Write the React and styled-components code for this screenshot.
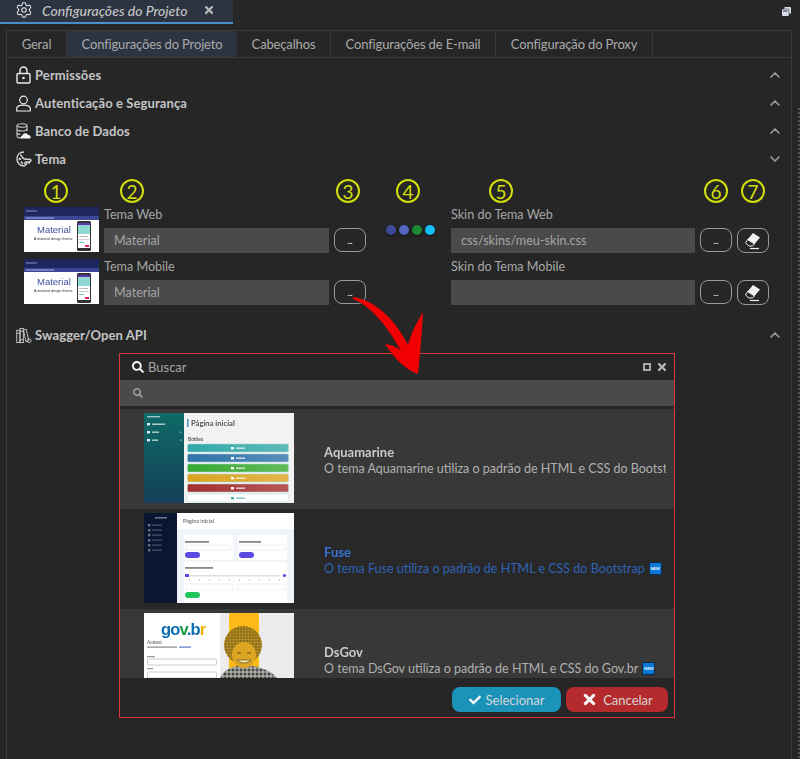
import React from 'react';
import styled, { createGlobalStyle } from 'styled-components';
import { ChevronUp, ChevronDown, Settings } from 'lucide-react';
import { FaSearch, FaCheck, FaTimes, FaWindowRestore } from 'react-icons/fa';

const tabs = [
  { label: 'Geral', width: 60 },
  { label: 'Configurações do Projeto', width: 170, active: true },
  { label: 'Cabeçalhos', width: 94 },
  { label: 'Configurações de E-mail', width: 165 },
  { label: 'Configuração do Proxy', width: 157 },
];

function App() {
  return (
    <Page>
      <GlobalStyle />
      <TopBar>
        <TopTab>
          <Settings size={18} strokeWidth={1.4} color="#e6e6e6" />
          <TopTitle>Configurações do Projeto</TopTitle>
          <FaTimes size={12} color="#b8b8b8" />
        </TopTab>
        <RestoreIcon>
          <FaWindowRestore size={9} />
        </RestoreIcon>
      </TopBar>

      <Panel>
        <TabRow>
          {tabs.map(tab => (
            <Tab key={tab.label} $width={tab.width} $active={tab.active}>
              {tab.label}
            </Tab>
          ))}
        </TabRow>

        <Section icon={<LockIcon />} title="Permissões" />
        <Section icon={<UserIcon />} title="Autenticação e Segurança" />
        <Section icon={<DatabaseIcon />} title="Banco de Dados" />
        <Section icon={<PaletteIcon />} title="Tema" open />

        <ThemeGrid>
          <Mark $offset={20}>1</Mark>
          <Mark $offset={16}>2</Mark>
          <Mark $offset={2}>3</Mark>
          <Mark $offset={25}>4</Mark>
          <Mark $offset={38}>5</Mark>
          <Mark $offset={4}>6</Mark>
          <Mark $offset={4}>7</Mark>

          <MaterialThumb />
          <Field label="Tema Web" value="Material" />
          <DotsButton>...</DotsButton>
          <Dots>
            <Dot $color="#3f4a96" />
            <Dot $color="#5566c0" />
            <Dot $color="#1f8a35" />
            <Dot $color="#12bdf5" />
          </Dots>
          <Field label="Skin do Tema Web" value="css/skins/meu-skin.css" />
          <DotsButton>...</DotsButton>
          <IconButton>
            <EraserIcon />
          </IconButton>

          <MaterialThumb />
          <Field label="Tema Mobile" value="Material" />
          <DotsButton>...</DotsButton>
          <div />
          <Field label="Skin do Tema Mobile" value="" />
          <DotsButton>...</DotsButton>
          <IconButton>
            <EraserIcon />
          </IconButton>
        </ThemeGrid>

        <SwaggerSection>
          <Section icon={<BooksIcon />} title="Swagger/Open API" />
        </SwaggerSection>
      </Panel>

      <Dialog>
        <DialogHeader>
          <FaSearch size={12} color="#f4f4f4" />
          <DialogTitle>Buscar</DialogTitle>
          <WindowActions>
            <SquareButton />
            <FaTimes size={12} color="#b4b4b4" />
          </WindowActions>
        </DialogHeader>
        <SearchBar>
          <FaSearch size={10} color="#a0a0a0" />
        </SearchBar>
        <List>
          <ThemeRow $alt>
            <AquamarineThumb />
            <ThemeText>
              <ThemeName>Aquamarine</ThemeName>
              <ThemeDesc>O tema Aquamarine utiliza o padrão de HTML e CSS do Bootstrap</ThemeDesc>
            </ThemeText>
          </ThemeRow>
          <ThemeRow $selected>
            <FuseThumb />
            <ThemeText>
              <ThemeName>Fuse</ThemeName>
              <ThemeDesc>
                O tema Fuse utiliza o padrão de HTML e CSS do Bootstrap
                <NewBadge>NEW</NewBadge>
              </ThemeDesc>
            </ThemeText>
          </ThemeRow>
          <ThemeRow $alt>
            <DsGovThumb />
            <ThemeText>
              <ThemeName>DsGov</ThemeName>
              <ThemeDesc>
                O tema DsGov utiliza o padrão de HTML e CSS do Gov.br
                <NewBadge>NEW</NewBadge>
              </ThemeDesc>
            </ThemeText>
          </ThemeRow>
        </List>
        <DialogFooter>
          <ActionButton $color="#1b92b8" $width={109}>
            <FaCheck size={12} color="#f4f4f4" />
            Selecionar
          </ActionButton>
          <ActionButton $color="#b52a2c" $width={102}>
            <FaTimes size={17} color="#f4f4f4" />
            Cancelar
          </ActionButton>
        </DialogFooter>
      </Dialog>

      <Arrow viewBox="0 0 800 759">
        <path
          d="M353 297 C376 300 396 321 408 345 C411 333 417 322 423 312 C422 333 420 354 418 374 C408 371 394 359 385 344 C392 345 397 347 401 351 C388 327 371 306 353 299 Z"
          fill="#f00000"
        />
      </Arrow>
      <EdgeStrip />
    </Page>
  );
}

function Section({ icon, title, open }) {
  return (
    <SectionRow>
      <SectionIcon>{icon}</SectionIcon>
      <SectionTitle>{title}</SectionTitle>
      {open ? <ChevronDown size={16} strokeWidth={2.5} color="#9a9a9a" /> : <ChevronUp size={16} strokeWidth={2.5} color="#9a9a9a" />}
    </SectionRow>
  );
}

function Field({ label, value }) {
  return (
    <FieldBox>
      <FieldLabel>{label}</FieldLabel>
      <Input>{value}</Input>
    </FieldBox>
  );
}

function LockIcon() {
  return (
    <svg width="16" height="18" viewBox="0 0 16 18" fill="none" stroke="#ececec" strokeWidth="1.4">
      <rect x="1" y="7.5" width="13" height="9.5" rx="1" />
      <path d="M4 7.5 V4.5 a3.5 3.5 0 0 1 7 0 V7.5" />
      <circle cx="7.5" cy="12" r="1.3" fill="#ececec" stroke="none" />
    </svg>
  );
}

function UserIcon() {
  return (
    <svg width="16" height="17" viewBox="0 0 16 17" fill="none" stroke="#ececec" strokeWidth="1.2">
      <circle cx="7.5" cy="5" r="3.8" />
      <path d="M0.7 16 V13.8 C0.7 11.3 3.5 10.2 7.5 10.2 C11.5 10.2 14.3 11.3 14.3 13.8 V16 Z" />
    </svg>
  );
}

function DatabaseIcon() {
  return (
    <svg width="16" height="16" viewBox="0 0 16 16" fill="none" stroke="#c8c8c8" strokeWidth="1.1">
      <ellipse cx="6" cy="2.5" rx="5" ry="1.8" />
      <path d="M1 2.5 V13 C1 14.2 3.5 15 6 15 M1 6 C1 7.2 3.5 8 6 8 C8.5 8 11 7.2 11 6 M1 9.5 C1 10.7 2.5 11.3 4.5 11.4 M11 2.5 V8" />
      <path d="M6 15.5 C4.5 15.5 4.5 12.5 6.5 12.5 C7 10 11 9.5 12 12 C14.5 11.5 16 15.5 13.5 15.5 Z" fill="#f4f4f4" stroke="none" />
    </svg>
  );
}

function PaletteIcon() {
  return (
    <svg width="16" height="16" viewBox="0 0 16 16" fill="none" stroke="#d4d4d4" strokeWidth="1.4">
      <path d="M8 1 C3.5 1 1 4 1 8 C1 12 4 15 8 15 C9.5 15 9.5 13.5 9 12.8 C8.5 12 9 11 10 11 H13 C14.5 11 15 10 15 8.5" />
      <path d="M4.5 3.5 C6 5 6 7.5 8.5 8 C10.5 8.4 13 8 15 8.5 M5 10.5 L7 13 M10.5 11 V14 M13 11 V13" />
      <circle cx="3.8" cy="8" r="1.2" fill="#d4d4d4" stroke="none" />
    </svg>
  );
}

function BooksIcon() {
  return (
    <svg width="17" height="17" viewBox="0 0 17 17" fill="none" stroke="#c8c8c8" strokeWidth="1">
      <rect x="0.8" y="3" width="3.4" height="13" />
      <rect x="4.2" y="1" width="3.6" height="15" />
      <path d="M0.8 6 H4.2 M4.2 4 H7.8 M4.2 13 H7.8" />
      <path d="M8 2.5 L11 2 L13.5 14 L10.5 15 Z" />
      <circle cx="14" cy="14" r="2" />
    </svg>
  );
}

function EraserIcon() {
  return (
    <svg width="20" height="18" viewBox="0 0 20 18" fill="none">
      <path d="M10 1 L17 5.5 L11.5 12 L4.5 7.5 Z" fill="#f2f2f2" />
      <path d="M4.5 7.5 L11.5 12 L9.5 14 H6 L2.5 11 Z" stroke="#f2f2f2" strokeWidth="1" />
      <path d="M7 16.5 H16" stroke="#f2f2f2" strokeWidth="1.2" />
    </svg>
  );
}

function MaterialThumb() {
  return (
    <ThumbPicture width="75" height="45" viewBox="0 0 75 45" role="img">
      <rect width="75" height="45" fill="#fff" />
      <rect width="75" height="9" fill="#1f2761" />
      <rect y="9" width="75" height="4" fill="#3a4694" />
      <rect x="2" y="3.5" width="11" height="1" fill="#8890b8" />
      <rect x="2" y="10.5" width="28" height="1" fill="#aab2dc" />
      <MaterialWord x="13" y="26">Material</MaterialWord>
      <MaterialSub x="10" y="32.5">A material design theme</MaterialSub>
      <rect x="53" y="14" width="14" height="30" rx="1.5" fill="#333" />
      <rect x="54" y="16" width="12" height="2" fill="#5e35b1" />
      <rect x="54" y="18" width="12" height="9" fill="#8fd8d2" />
      <rect x="54" y="27" width="12" height="14" fill="#fff" />
      <rect x="55" y="29" width="9" height="1" fill="#bbb" />
      <rect x="55" y="32" width="10" height="1" fill="#ccc" />
      <rect x="55" y="35" width="5" height="1" fill="#7cc" />
      <rect x="61" y="38" width="4" height="2" fill="#e91e63" />
    </ThumbPicture>
  );
}

const aquaButtons = ['#33a8a8', '#2f72a8', '#38aa32', '#dba41f', '#a52f2f', '#ffffff'];

function AquamarineThumb() {
  return (
    <ThumbSvg viewBox="0 0 150 90" role="img">
      <defs>
        <linearGradient id="aquaSide" x1="0" y1="0" x2="0" y2="1">
          <stop offset="0" stopColor="#0f6a66" />
          <stop offset="1" stopColor="#144059" />
        </linearGradient>
        <linearGradient id="aquaSheen" x1="0" y1="0" x2="1" y2="0">
          <stop offset="0" stopColor="#fff" stopOpacity="0" />
          <stop offset="1" stopColor="#fff" stopOpacity="0.2" />
        </linearGradient>
      </defs>
      <rect width="150" height="90" fill="#f2f2f2" />
      <rect width="40" height="90" fill="url(#aquaSide)" />
      <rect x="43" y="6" width="1.6" height="8" fill="#3fa0c0" />
      <ThumbHeading x="47" y="13">Página inicial</ThumbHeading>
      <ThumbSmall x="44" y="28" $bold>Botões</ThumbSmall>
      {aquaButtons.map((color, i) => (
        <g key={color}>
          <rect x="43.5" y={31 + i * 10} width="101" height="8" rx="1.5" fill={color} stroke="#a9d6d8" strokeWidth="0.5" />
          <rect x="43.5" y={31 + i * 10} width="101" height="8" rx="1.5" fill="url(#aquaSheen)" />
          <rect x="87" y={34 + i * 10} width="3" height="2.4" fill={i === 5 ? '#4aa' : '#fff'} />
          <rect x="92" y={34.4 + i * 10} width="9" height="1.6" fill={i === 5 ? '#8cc' : '#ffffffaa'} />
        </g>
      ))}
      <rect x="3" y="3" width="13" height="1.4" fill="#9fc4c4" />
      <rect x="3" y="10" width="3" height="2.4" fill="#dfeeee" />
      <rect x="8" y="10.5" width="13" height="1.4" fill="#b7d3d3" />
      <rect x="3" y="18" width="3" height="2.4" fill="#dfeeee" />
      <rect x="8" y="18.5" width="7" height="1.4" fill="#b7d3d3" />
      <rect x="3" y="26" width="3" height="2.4" fill="#dfeeee" />
      <rect x="8" y="26.5" width="6" height="1.4" fill="#b7d3d3" />
      <rect x="36" y="18.5" width="1.4" height="1.4" fill="#8fb3b3" />
      <rect x="36" y="26.5" width="1.4" height="1.4" fill="#8fb3b3" />
    </ThumbSvg>
  );
}

function FuseThumb() {
  return (
    <ThumbSvg viewBox="0 0 150 90" role="img">
      <rect width="150" height="90" fill="#f1f4f9" />
      <rect width="33" height="90" fill="#0b1730" />
      <rect x="33" width="117" height="16" fill="#fff" />
      <ThumbSmall x="39" y="10" $size={5.5}>Página inicial</ThumbSmall>
      <rect x="11" y="4" width="12" height="1.6" fill="#6a7488" />
      {[11, 16, 21, 26, 31, 36].map(y => (
        <g key={y}>
          <rect x="4" y={y} width="2.4" height="2.4" fill="#6a7488" />
          <rect x="8" y={y + 0.5} width="10" height="1.2" fill="#4a5570" />
        </g>
      ))}
      <rect x="40" y="22" width="49" height="25" fill="#fff" />
      <rect x="94" y="22" width="49" height="25" fill="#fff" />
      <rect x="40" y="49" width="103" height="41" fill="#fff" />
      <rect x="41" y="28" width="24" height="1.8" fill="#888" />
      <rect x="95" y="28" width="22" height="1.8" fill="#888" />
      <rect x="42" y="32" width="45" height="5" fill="#fff" stroke="#e2e2e2" strokeWidth="0.5" />
      <rect x="96" y="32" width="45" height="5" fill="#fff" stroke="#e2e2e2" strokeWidth="0.5" />
      <rect x="41" y="39" width="15" height="6" rx="3" fill="#5a4be0" />
      <rect x="95" y="39" width="15" height="6" rx="3" fill="#5a4be0" />
      <rect x="41" y="54" width="28" height="1.8" fill="#888" />
      <rect x="42" y="62" width="94" height="1.4" fill="#ddd" />
      <rect x="41" y="61" width="4" height="3" fill="#5a4be0" />
      <circle cx="140.5" cy="62.5" r="1.6" fill="#5a4be0" />
      {[45, 55, 65, 75, 85, 95, 105, 115, 125, 135].map(x => (
        <rect key={x} x={x} y="66" width="0.8" height="1.6" fill="#aaa" />
      ))}
      <rect x="42" y="71" width="47" height="6" fill="#fff" stroke="#e2e2e2" strokeWidth="0.5" />
      <rect x="93" y="71" width="48" height="6" fill="#fff" stroke="#e2e2e2" strokeWidth="0.5" />
      <rect x="41" y="79" width="15" height="6" rx="3" fill="#22c55e" />
    </ThumbSvg>
  );
}

function DsGovThumb() {
  return (
    <ThumbSvg viewBox="0 0 150 90" role="img">
      <defs>
        <pattern id="govCloth" width="4" height="4" patternUnits="userSpaceOnUse">
          <rect width="4" height="4" fill="#8a8a86" />
          <circle cx="1" cy="1" r="1" fill="#2e2e2c" />
          <circle cx="3" cy="3" r="0.8" fill="#d6d6d2" />
        </pattern>
        <pattern id="govHair" width="3" height="3" patternUnits="userSpaceOnUse">
          <rect width="3" height="3" fill="#b08a20" />
          <circle cx="1" cy="1" r="0.8" fill="#5f4c16" />
        </pattern>
      </defs>
      <rect width="150" height="90" fill="#ececef" />
      <rect width="76" height="90" fill="#fff" />
      <rect x="85" width="30" height="90" fill="#fdbb1a" />
      <GovLogo x="17" y="22">
        <tspan fill="#0b6cb4">go</tspan>
        <tspan fill="#1a9a4b">v</tspan>
        <tspan fill="#0b6cb4">.b</tspan>
        <tspan fill="#f2b100">r</tspan>
      </GovLogo>
      <ThumbSmall x="3" y="31">Acesso</ThumbSmall>
      <rect x="3" y="33.5" width="30" height="1.2" fill="#888" />
      <rect x="35" y="33.5" width="12" height="1.2" fill="#5a78c8" />
      <rect x="3" y="43" width="8" height="1.2" fill="#999" />
      <rect x="3.5" y="46" width="69" height="6" rx="1" fill="#fff" stroke="#ccc" />
      <rect x="3" y="55" width="6" height="1.2" fill="#999" />
      <rect x="3.5" y="59" width="69" height="6" rx="1" fill="#fff" stroke="#ccc" />
      <path d="M76 66 C78 58 86 54 98 52 C110 52 126 56 134 66 Z" fill="url(#govCloth)" />
      <circle cx="99" cy="32" r="19" fill="url(#govHair)" />
      <ellipse cx="100" cy="42" rx="12" ry="13" fill="#dca522" />
      <path d="M93 40 H97 M103 40 H107" stroke="#5d4a14" strokeWidth="1.2" />
      <path d="M93 47 C96 51 104 51 107 47 Z" fill="#f5e6b0" stroke="#5d4a14" strokeWidth="0.7" />
    </ThumbSvg>
  );
}

const GlobalStyle = createGlobalStyle`
  html, body {
    margin: 0;
    background: #262626;
  }
  body {
    font-family: Lato, "Noto Sans", sans-serif;
    color: #b4b4b4;
  }
`;

const Page = styled.div`
  position: relative;
  width: 800px;
  height: 759px;
  overflow: hidden;
  background: #262626;
`;

const TopBar = styled.div`
  display: flex;
  align-items: flex-start;
  justify-content: space-between;
  height: 24px;
`;

const TopTab = styled.div`
  display: flex;
  align-items: center;
  box-sizing: border-box;
  width: 233px;
  height: 24px;
  padding: 0 0 2px 15px;
  background: #2c3341;
  border-bottom: 2px solid #4a8fc7;
`;

const TopTitle = styled.span`
  width: 161px;
  margin-left: 9px;
  font-size: 14px;
  font-style: italic;
  font-weight: 500;
  color: #c4c4c4;
  white-space: nowrap;
`;

const RestoreIcon = styled.div`
  display: flex;
  margin: 7px 9px 0 0;
  color: #d8dcea;
`;

const Panel = styled.div`
  box-sizing: border-box;
  width: 786px;
  height: 729px;
  margin: 6px 0 0 6px;
  border: 1px solid #3a3a3a;
  border-bottom: none;
`;

const TabRow = styled.div`
  display: flex;
  height: 26px;
  border-bottom: 1px solid #3a3a3a;
  margin-bottom: 3px;
`;

const Tab = styled.div`
  display: flex;
  align-items: center;
  justify-content: center;
  box-sizing: border-box;
  width: ${props => props.$width}px;
  font-size: 13px;
  letter-spacing: -0.15px;
  color: #aaa;
  white-space: nowrap;
  border-right: ${props => (props.$active ? 'none' : '1px solid #3a3a3a')};
  background: ${props => (props.$active ? '#2c3341' : 'transparent')};
`;

const SectionRow = styled.div`
  display: flex;
  align-items: center;
  height: 28px;
  padding: 0 8px 0 9px;
`;

const SectionIcon = styled.div`
  display: flex;
  justify-content: center;
  width: 16px;
  margin-right: 3px;
`;

const SectionTitle = styled.div`
  flex: 1;
  font-size: 13px;
  font-weight: 700;
  letter-spacing: 0.1px;
  color: #c4c4c4;
`;

const ThemeGrid = styled.div`
  display: grid;
  grid-template-columns: 75px 225px 32px 75px 244px 32px 32px;
  column-gap: 5px;
  row-gap: 6px;
  padding: 6px 0 0 17px;
`;

const Mark = styled.div`
  display: flex;
  align-items: center;
  justify-content: center;
  box-sizing: border-box;
  width: 24px;
  height: 24px;
  margin-left: ${props => props.$offset}px;
  margin-bottom: -2px;
  border: 2px solid #d2de0a;
  border-radius: 50%;
  font-size: 19px;
  font-weight: 400;
  color: #d2de0a;
`;

const ThumbPicture = styled.svg`
  display: block;
  filter: blur(0.3px);
`;

const MaterialWord = styled.text`
  font-family: "Liberation Sans", sans-serif;
  font-size: 9.5px;
  fill: #3f4f9f;
`;

const MaterialSub = styled.text`
  font-family: "Liberation Sans", sans-serif;
  font-size: 3.6px;
  fill: #333;
`;

const FieldBox = styled.div`
  display: flex;
  flex-direction: column;
  height: 46px;
`;

const FieldLabel = styled.div`
  height: 21px;
  line-height: 15px;
  font-size: 12.6px;
  color: #a6a6a6;
  white-space: nowrap;
`;

const Input = styled.div`
  box-sizing: border-box;
  height: 25px;
  padding-left: 10px;
  line-height: 26px;
  font-size: 12.6px;
  color: #a6a6a6;
  background: #4a4a4a;
`;

const DotsButton = styled.div`
  display: flex;
  align-items: flex-end;
  justify-content: center;
  align-self: end;
  box-sizing: border-box;
  height: 24px;
  margin-bottom: 1px;
  padding-bottom: 7px;
  border: 1px solid #999;
  border-radius: 8px;
  font-size: 7px;
  font-weight: 700;
  line-height: 6px;
  color: #fff;
`;

const IconButton = styled(DotsButton)`
  align-items: center;
  height: 25px;
  margin-bottom: 0;
  padding-bottom: 0;
`;

const Dots = styled.div`
  display: flex;
  gap: 3px;
  padding: 18px 0 0 15px;
`;

const Dot = styled.span`
  width: 10px;
  height: 10px;
  border-radius: 50%;
  background: ${props => props.$color};
  box-shadow: 0 1px 3px rgba(0, 0, 0, 0.6);
`;

const SwaggerSection = styled.div`
  margin-top: 16px;
`;

const Dialog = styled.div`
  position: absolute;
  top: 353px;
  left: 119px;
  display: flex;
  flex-direction: column;
  box-sizing: border-box;
  width: 556px;
  height: 365px;
  border: 1px solid #d83838;
  background: #262626;
`;

const DialogHeader = styled.div`
  display: flex;
  align-items: center;
  height: 26px;
  padding: 0 6px 0 12px;
  flex-shrink: 0;
`;

const DialogTitle = styled.span`
  flex: 1;
  margin-left: 4px;
  font-size: 13px;
  color: #a4a4a4;
`;

const WindowActions = styled.div`
  display: flex;
  align-items: center;
  gap: 5px;
`;

const SquareButton = styled.span`
  box-sizing: border-box;
  width: 8px;
  height: 8px;
  border: 2px solid #a8a8a8;
`;

const SearchBar = styled.div`
  display: flex;
  align-items: center;
  flex-shrink: 0;
  height: 26px;
  margin-bottom: 3px;
  padding-left: 13px;
  background: #4a4a4a;
`;

const List = styled.div`
  flex: 1;
  overflow: hidden;
`;

const ThemeRow = styled.div`
  display: flex;
  box-sizing: border-box;
  height: 100px;
  padding: 4px 8px 0 24px;
  background: ${props => (props.$alt ? '#383838' : '#282828')};
  color: ${props => (props.$selected ? '#2f63b8' : '#b0b0b0')};
`;

const ThumbSvg = styled.svg`
  flex-shrink: 0;
  width: 150px;
  height: 90px;
  filter: blur(0.35px);
`;

const ThumbHeading = styled.text`
  font-family: Lato, sans-serif;
  font-size: 7.6px;
  font-weight: 700;
  fill: #555;
`;

const ThumbSmall = styled.text`
  font-family: Lato, sans-serif;
  font-size: ${props => props.$size || 4.8}px;
  font-weight: ${props => (props.$bold ? 700 : 400)};
  fill: #555;
`;

const GovLogo = styled.text`
  font-family: "Liberation Sans", sans-serif;
  font-size: 16.5px;
  font-weight: 700;
  letter-spacing: -0.8px;
`;

const ThemeText = styled.div`
  display: flex;
  flex-direction: column;
  justify-content: center;
  box-sizing: border-box;
  min-width: 0;
  height: 90px;
  margin-left: 30px;
  padding-top: 4px;
  overflow: hidden;
`;

const ThemeName = styled.div`
  font-size: 13px;
  font-weight: 700;
  line-height: 16px;
  filter: brightness(1.15);
`;

const ThemeDesc = styled.div`
  display: flex;
  align-items: center;
  gap: 4px;
  height: 16px;
  font-size: 12.5px;
  white-space: nowrap;
`;

const NewBadge = styled.span`
  flex-shrink: 0;
  width: 13px;
  height: 13px;
  border: 1px solid #0d2a4a;
  box-sizing: border-box;
  background: #0a78d7;
  color: #fff;
  font-size: 4px;
  font-weight: 700;
  line-height: 11px;
  text-align: center;
`;

const DialogFooter = styled.div`
  display: flex;
  align-items: flex-start;
  justify-content: flex-end;
  gap: 5px;
  flex-shrink: 0;
  height: 39px;
  padding: 9px 6px 0 0;
  box-sizing: border-box;
`;

const ActionButton = styled.div`
  display: flex;
  align-items: center;
  justify-content: center;
  gap: 5px;
  width: ${props => props.$width}px;
  height: 25px;
  border-radius: 8px;
  background: ${props => props.$color};
  font-size: 13px;
  color: #d6d6d6;
`;

const Arrow = styled.svg`
  position: absolute;
  top: 0;
  left: 0;
  width: 800px;
  height: 759px;
  pointer-events: none;
`;

const EdgeStrip = styled.div`
  position: absolute;
  top: 108px;
  right: 0;
  bottom: 0;
  width: 2px;
  background: repeating-linear-gradient(#555 0 2px, #222 2px 4px);
`;

export default App;
